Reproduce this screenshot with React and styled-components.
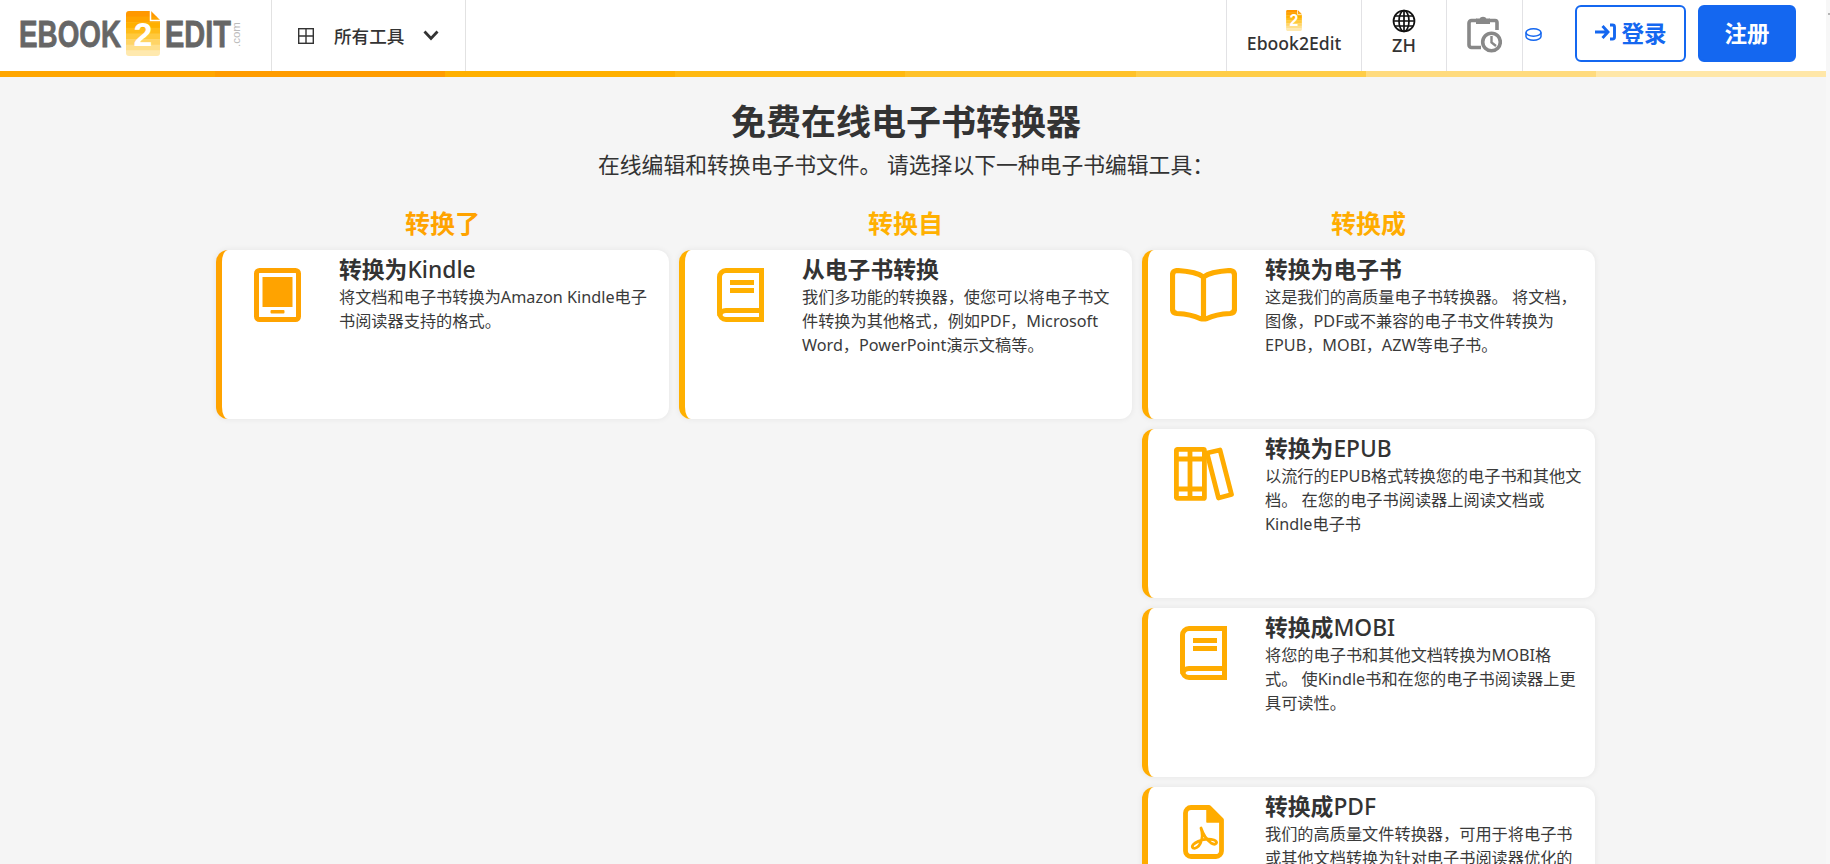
import React from "react";
import styled, { createGlobalStyle } from "styled-components";

const Global = createGlobalStyle`
  html, body { margin: 0; padding: 0; height: 864px; overflow: hidden; background: #f5f5f5; }
  body { font-family: "Noto Sans", "Noto Sans CJK SC", sans-serif; color: #333; }
  * { box-sizing: border-box; }
`;

const Shell = styled.div`
  display: flex;
  height: 864px;
  overflow: hidden;
`;
const Page = styled.div`
  width: 1826px;
  flex: none;
`;
const Rail = styled.div`
  flex: 1;
  background: #f7f7f7;
  padding-top: 13px;
  &::before {
    content: "";
    display: block;
    height: 2px;
    margin-left: 2px;
    background: #b5b5b5;
  }
`;
const Header = styled.header`
  display: flex;
  height: 71px;
  background: #fff;
`;
const LogoCell = styled.div`
  width: 271px;
  padding: 11px 0 0 19px;
`;
const ToolMenu = styled.div`
  width: 195px;
  display: flex;
  align-items: center;
  padding-left: 26px;
  border-left: 1px solid #e2e2e2;
  border-right: 1px solid #e2e2e2;
  font-size: 17.6px;
  font-weight: 500;
  color: #333;
`;
const ToolLabel = styled.span`
  margin: 0 19px 0 20px;
`;
const Spacer = styled.div`
  flex: 1;
`;
const NavCell = styled.div`
  width: ${(p) => p.$w}px;
  display: flex;
  flex-direction: column;
  align-items: center;
  padding-top: ${(p) => p.$top}px;
  border-left: 1px solid #e2e2e5;
  font-size: ${(p) => p.$size}px;
  font-weight: 500;
  line-height: 24px;
  color: #333;
`;
const CoinCell = styled(NavCell)`
  align-items: flex-start;
  padding-left: 2px;
`;
const Buttons = styled.div`
  display: flex;
  gap: 12px;
  padding: 5px 30px 0 0;
`;
const Btn = styled.button`
  width: ${(p) => p.$w}px;
  height: 57px;
  display: flex;
  align-items: center;
  justify-content: center;
  gap: 5px;
  padding: 0 0 3px;
  border-radius: 6px;
  border: 2px solid #1467f0;
  background: ${(p) => (p.$solid ? "#1467f0" : "#fff")};
  color: ${(p) => (p.$solid ? "#fff" : "#1467f0")};
  font: 700 22.5px "Noto Sans", "Noto Sans CJK SC", sans-serif;
`;
const Strip = styled.div`
  display: flex;
  height: 6px;
`;
const StripPart = styled.div`
  flex: ${(p) => (p.$first ? "0 0 215px" : "1")};
  background: ${(p) => p.$c};
`;
const Main = styled.main`
  padding-top: 23px;
`;
const Hero = styled.div`
  width: 1400px;
  margin-left: 206px;
  text-align: center;
`;
const H1 = styled.h1`
  margin: 0;
  font-size: 35px;
  line-height: 44px;
  font-weight: 700;
  color: #333;
`;
const Sub = styled.p`
  margin: 6px 0 0;
  font-size: 21.8px;
  line-height: 30px;
  color: #333;
`;
const Columns = styled.div`
  display: grid;
  grid-template-columns: repeat(3, 463px);
  margin: 27px 0 0 216px;
`;
const Column = styled.section`
  display: flex;
  flex-direction: column;
  gap: 10px;
`;
const ColTitle = styled.h2`
  width: 453px;
  margin: 0 0 1px;
  text-align: center;
  font-size: 25px;
  line-height: 32px;
  font-weight: 700;
  color: ${(p) => p.$c};
`;
const Card = styled.article`
  width: 453px;
  height: 169px;
  flex: none;
  display: flex;
  background: #fff;
  border-left: 6px solid ${(p) => p.$c};
  border-radius: 12px;
  box-shadow: 0 0 6px rgba(0, 0, 0, 0.07);
`;
const IconCell = styled.div`
  flex: 0 0 117px;
  padding: 18px 6px 0 0;
  display: flex;
  justify-content: center;
  align-items: flex-start;
  color: ${(p) => p.$c};
`;
const CardBody = styled.div`
  width: 318px;
  padding-top: 6px;
`;
const CardTitle = styled.h3`
  margin: 0;
  font-size: 22.8px;
  line-height: 28px;
  font-weight: 500;
  color: #333;
`;
const TitleCjk = styled.span`
  font-weight: 700;
`;
const CardText = styled.p`
  margin: 1px 0 0;
  font-size: 16.2px;
  line-height: 24px;
  color: #3a3a3a;
`;

const stripes = ["#ff9800", "#ffa400", "#ffb000", "#ffbc1a", "#ffc93d", "#ffd466", "#ffdf8a", "#ffe9ae"];

function DocMark({ x = 0, y = 0, w = 34, h = 45, id }) {
  const bh = 45 / 8;
  return (
    <svg x={x} y={y} width={w} height={h} viewBox="0 0 34 45" aria-hidden="true">
      <defs>
        <clipPath id={id}>
          <path d="M3 0H25L34 9V42a3 3 0 0 1-3 3H3a3 3 0 0 1-3-3V3a3 3 0 0 1 3-3Z" />
        </clipPath>
      </defs>
      <g clipPath={`url(#${id})`}>
        {stripes.map((c, i) => (
          <rect key={c} x="0" y={i * bh} width="34" height={bh + 0.5} fill={c} />
        ))}
      </g>
      <path d="M24.5 0V9.5H34" fill="none" stroke="#fff" strokeWidth="1.5" />
      <text x="17" y="35" textAnchor="middle" fontFamily="'Liberation Sans', sans-serif" fontWeight="700" fontSize="34" fill="#fff">
        2
      </text>
    </svg>
  );
}

function Logo() {
  const font = "'Liberation Sans', sans-serif";
  return (
    <svg width="226" height="48" viewBox="0 0 226 48" aria-label="Ebook2Edit">
      <g transform="scale(0.752 1)">
        <text x="0" y="36" fontFamily={font} fontWeight="700" fontSize="37" fill="#666" stroke="#666" strokeWidth="0.8">
          EBOOK
        </text>
      </g>
      <DocMark x={107} y={0} id="logoDoc" />
      <g transform="translate(146 0) scale(0.783 1)">
        <text x="0" y="36" fontFamily={font} fontWeight="700" fontSize="37" fill="#666" stroke="#666" strokeWidth="0.8">
          EDIT
        </text>
      </g>
      <text transform="translate(221 36) rotate(-90)" fontFamily={font} fontSize="11.5" fill="#bbb">
        .com
      </text>
    </svg>
  );
}

const GridIcon = () => (
  <svg width="16" height="16" viewBox="0 0 16 16" fill="none" stroke="#333" strokeWidth="1.4">
    <rect x="0.7" y="0.7" width="14.6" height="14.6" />
    <path d="M8 1V15M1 8H15" />
  </svg>
);
const Chevron = () => (
  <svg width="16" height="11" viewBox="0 0 16 11" fill="none" stroke="#333" strokeWidth="2.8">
    <path d="M1.5 1.5L8 8.5L14.5 1.5" />
  </svg>
);
const Globe = () => (
  <svg width="24" height="24" viewBox="0 0 24 24" fill="none" stroke="#111" strokeWidth="1.7">
    <circle cx="12" cy="12" r="10.5" />
    <ellipse cx="12" cy="12" rx="5" ry="10.5" />
    <path d="M12 1.5V22.5M1.5 12H22.5M3 7H21M3 17H21" />
  </svg>
);
const ClipClock = () => (
  <svg width="35" height="38" viewBox="0 0 35 38" fill="none" stroke="#888" strokeWidth="3.6">
    <path d="M10 5.500H4.500a2.500 2.500 0 0 0-2.500 2.500V30a2.500 2.500 0 0 0 2.500 2.500H14" />
    <path d="M22 5.500H28a2 2 0 0 1 2 2V15" />
    <path d="M10 8V4.500H13a3.500 3.500 0 0 1 6 0H22V8Z" fill="#888" strokeWidth="2" />
    <circle cx="24.500" cy="27" r="8.800" fill="#fff" />
    <path d="M24.500 21V27.500L29 31" strokeWidth="2.400" />
  </svg>
);
const Coin = () => (
  <svg width="17" height="13" viewBox="0 0 17 13" fill="none" stroke="#1467f0" strokeWidth="1.500">
    <ellipse cx="8.500" cy="4.500" rx="7.500" ry="3.700" />
    <path d="M1 4.500V8.500C1 10.500 4.500 12.200 8.500 12.200S16 10.500 16 8.500V4.500" />
  </svg>
);
const LoginIcon = () => (
  <svg width="22" height="18" viewBox="0 0 22 18" fill="none" stroke="currentColor" strokeWidth="2.900">
    <path d="M1 9H13M8.500 3L14 9L8.500 15" />
    <path d="M16 2H18.500A2 2 0 0 1 20.500 4V14A2 2 0 0 1 18.500 16H16" />
  </svg>
);

const KindleIcon = () => (
  <svg width="47" height="54" viewBox="0 0 47 54" fill="currentColor">
    <rect x="2.500" y="2.500" width="42" height="49" rx="3" fill="none" stroke="currentColor" strokeWidth="5" />
    <rect x="8.500" y="9" width="30" height="30" />
    <rect x="16.500" y="42" width="14" height="3.400" rx="1" />
  </svg>
);
const BookIcon = () => (
  <svg width="47" height="54" viewBox="0 0 47 54" fill="none" stroke="currentColor" strokeWidth="5">
    <path d="M47 2.500H9A6.500 6.500 0 0 0 2.500 9V45A6.500 6.500 0 0 0 9 51.500H47" />
    <path d="M44.500 2.500V42.500H9A6.500 6.500 0 0 0 2.500 48" />
    <path d="M44.500 42.500V51.500" />
    <path d="M13 14.500H37M13 22.500H37" />
  </svg>
);
const OpenBookIcon = () => (
  <svg width="67" height="54" viewBox="0 0 67 54" fill="none" stroke="currentColor" strokeWidth="5.200" strokeLinejoin="round">
    <path d="M33.500 9C28 5 16 3 7 2.500Q2.500 3 2.500 7V41Q2.500 45 7 45.500C18 46 25 48 30 50.500Q33.500 51.500 37 50.500C42 48 49 46 60 45.500Q64.500 45 64.500 41V7Q64.500 3 60 2.500C51 3 39 5 33.500 9V50" />
  </svg>
);
const ShelfIcon = () => (
  <svg width="60" height="54" viewBox="0 0 60 54" fill="none" stroke="currentColor" strokeWidth="4.800" strokeLinejoin="round">
    <rect x="2.400" y="2.400" width="28" height="49" rx="1" />
    <path d="M16 2V52M2 12H30M2 42H30" />
    <path d="M33 6L46 3L57.500 47.500L44.500 51Z" />
  </svg>
);
const PdfIcon = () => (
  <svg width="41" height="54" viewBox="0 0 41 54" fill="none" stroke="currentColor" strokeWidth="4.800" strokeLinejoin="round">
    <path d="M26 2.500H8A5.500 5.500 0 0 0 2.500 8V46A5.500 5.500 0 0 0 8 51.500H33A5.500 5.500 0 0 0 38.500 46V15Z" />
    <path d="M24 2V17H39L25 2Z" fill="currentColor" strokeWidth="1.500" />
    <path d="M18 23C22 35 15 45 10 43C6 39 21 32 31 35C36 37 33 41 28 38C24 35 20 29 18 23Z" strokeWidth="2.800" />
  </svg>
);

const groups = [
  {
    title: "转换了",
    accent: "#ffa300",
    cards: [
      { icon: <KindleIcon />, cjk: "转换为", latin: "Kindle", text: "将文档和电子书转换为Amazon Kindle电子书阅读器支持的格式。" },
    ],
  },
  {
    title: "转换自",
    accent: "#ffb000",
    cards: [
      { icon: <BookIcon />, cjk: "从电子书转换", latin: "", text: "我们多功能的转换器，使您可以将电子书文件转换为其他格式，例如PDF，Microsoft Word，PowerPoint演示文稿等。" },
    ],
  },
  {
    title: "转换成",
    accent: "#ffac00",
    cards: [
      { icon: <OpenBookIcon />, cjk: "转换为电子书", latin: "", text: "这是我们的高质量电子书转换器。 将文档，图像，PDF或不兼容的电子书文件转换为EPUB，MOBI，AZW等电子书。" },
      { icon: <ShelfIcon />, cjk: "转换为", latin: "EPUB", text: "以流行的EPUB格式转换您的电子书和其他文档。 在您的电子书阅读器上阅读文档或Kindle电子书" },
      { icon: <BookIcon />, cjk: "转换成", latin: "MOBI", text: "将您的电子书和其他文档转换为MOBI格式。 使Kindle书和在您的电子书阅读器上更具可读性。" },
      { icon: <PdfIcon />, cjk: "转换成", latin: "PDF", text: "我们的高质量文件转换器，可用于将电子书或其他文档转换为针对电子书阅读器优化的PDF。" },
    ],
  },
];

export default function App() {
  return (
    <Shell>
      <Global />
      <Page>
        <Header>
          <LogoCell>
            <Logo />
          </LogoCell>
          <ToolMenu>
            <GridIcon />
            <ToolLabel>所有工具</ToolLabel>
            <Chevron />
          </ToolMenu>
          <Spacer />
          <NavCell $w={135} $top={10} $size={17.6}>
            <DocMark w={16} h={21} id="navDoc" />
            <span>Ebook2Edit</span>
          </NavCell>
          <NavCell $w={85} $top={9} $size={18}>
            <Globe />
            <span>ZH</span>
          </NavCell>
          <NavCell $w={76} $top={15} $size={17}>
            <ClipClock />
          </NavCell>
          <CoinCell $w={53} $top={28} $size={17}>
            <Coin />
          </CoinCell>
          <Buttons>
            <Btn $w={111}>
              <LoginIcon />
              登录
            </Btn>
            <Btn $w={98} $solid>
              注册
            </Btn>
          </Buttons>
        </Header>
        <Strip>
          {["#ffa600", "#ff9c00", "#ffb000", "#ffb911", "#ffc229", "#ffcd47", "#ffdb7e", "#ffe7a8"].map((c, i) => (
            <StripPart key={c} $c={c} $first={i === 0} />
          ))}
        </Strip>
        <Main>
          <Hero>
            <H1>免费在线电子书转换器</H1>
            <Sub>在线编辑和转换电子书文件。 请选择以下一种电子书编辑工具：</Sub>
          </Hero>
          <Columns>
            {groups.map((g) => (
              <Column key={g.title}>
                <ColTitle $c={g.accent}>{g.title}</ColTitle>
                {g.cards.map((c) => (
                  <Card key={c.cjk + c.latin} $c={g.accent}>
                    <IconCell $c={g.accent}>{c.icon}</IconCell>
                    <CardBody>
                      <CardTitle>
                        <TitleCjk>{c.cjk}</TitleCjk>
                        {c.latin}
                      </CardTitle>
                      <CardText>{c.text}</CardText>
                    </CardBody>
                  </Card>
                ))}
              </Column>
            ))}
          </Columns>
        </Main>
      </Page>
      <Rail />
    </Shell>
  );
}
